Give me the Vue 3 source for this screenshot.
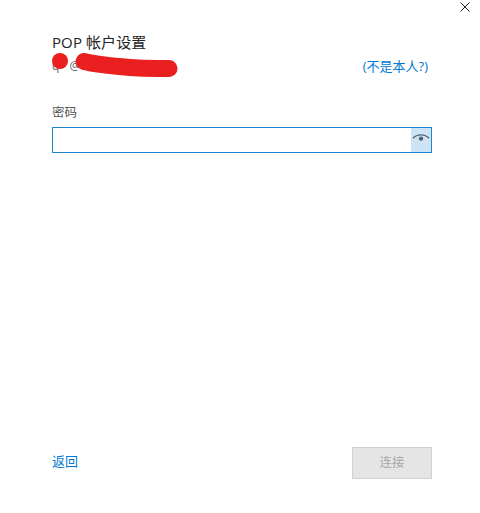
<script setup>
const title = 'POP 帐户设置'
</script>

<template>
  <div class="dialog">
    <button class="close" aria-label="关闭">
      <svg width="10" height="10" viewBox="0 0 10 10"><path d="M0.5 0.5L9.5 9.5M9.5 0.5L0.5 9.5" stroke="#222" stroke-width="1" fill="none" /></svg>
    </button>
    <main class="body">
      <h1 class="title">{{ title }}</h1>
      <div class="account">
        <span class="email">q @</span>
        <a class="link">(不是本人?)</a>
        <svg class="scribble" width="130" height="30" viewBox="0 0 130 30">
          <circle cx="8" cy="11" r="8" fill="#ea1f1f" />
          <path d="M32 11.5C42 14 60 16 78 17.5S105 18.5 117 18.5" stroke="#ea1f1f" stroke-width="17" stroke-linecap="round" fill="none" />
        </svg>
      </div>
      <label class="label" for="pw">密码</label>
      <div class="field">
        <input id="pw" class="input" type="password" />
        <span class="reveal">
          <svg width="18" height="10" viewBox="0 0 18 10">
            <path d="M1 5.2C5 0.8 13 0.8 17 5.2" stroke="#55626c" stroke-width="1.4" fill="none" />
            <circle cx="9" cy="5.6" r="2.2" fill="#55626c" />
          </svg>
        </span>
      </div>
    </main>
    <footer class="footer">
      <a class="link back">返回</a>
      <button class="connect" disabled>连接</button>
    </footer>
  </div>
</template>

<style>
html, body { margin: 0; background: #fff; }
</style>

<style scoped>
.dialog {
  position: relative;
  box-sizing: border-box;
  width: 480px;
  height: 513px;
  padding: 32px 48px 34px 52px;
  display: flex;
  flex-direction: column;
  background: #fff;
  font-family: "Open Sans", "Noto Sans CJK SC", sans-serif;
  color: #222;
}
.close {
  position: absolute;
  top: 2px;
  left: 460px;
  width: 10px;
  height: 10px;
  padding: 0;
  border: 0;
  background: none;
  display: block;
}
.close svg { display: block; }
.body { flex: 1; }
.title {
  margin: 0;
  font-size: 15px;
  font-weight: 400;
  line-height: 20px;
  letter-spacing: 0.1px;
  color: #222;
  opacity: 0.99;
}
.account {
  position: relative;
  display: flex;
  justify-content: space-between;
  align-items: center;
  height: 22px;
  margin-top: 2px;
  padding-right: 4px;
  font-size: 12px;
  color: #666;
}
.email { word-spacing: 7px; }
.link {
  color: #0078d4;
  font-size: 13px;
}
.scribble {
  position: absolute;
  left: 0;
  top: -4px;
}
.label {
  display: block;
  margin-top: 28px;
  font-size: 12.5px;
  line-height: 18px;
  color: #555;
}
.field {
  display: flex;
  height: 26px;
  margin-top: 5px;
  box-sizing: border-box;
  border: 1px solid #1f86d0;
}
.input {
  flex: 1;
  min-width: 0;
  border: 0;
  outline: 0;
  padding: 0 6px;
  background: #fff;
}
.reveal {
  width: 20px;
  box-sizing: border-box;
  padding-bottom: 4px;
  display: flex;
  align-items: center;
  justify-content: center;
  background: #cde4f7;
}
.footer {
  display: flex;
  justify-content: space-between;
  align-items: center;
}
.back {
  font-size: 13px;
  margin-bottom: 6px;
}
.connect {
  width: 80px;
  height: 32px;
  border: 1px solid #d0d0d0;
  background: #e5e5e5;
  color: #a8a8a8;
  font-family: inherit;
  font-size: 12.5px;
  padding: 0 0 3px;
}
</style>
